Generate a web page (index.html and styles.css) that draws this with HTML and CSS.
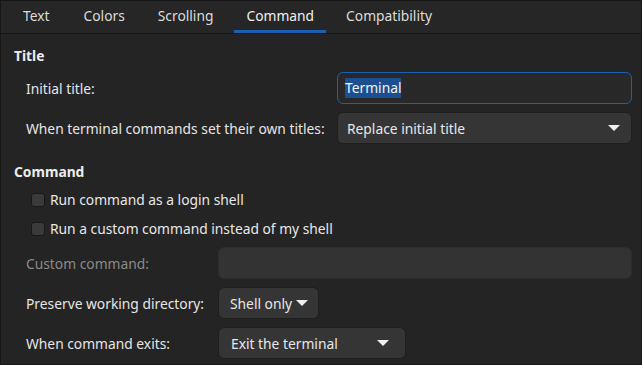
FILE: index.html
```html
<!DOCTYPE html>
<html>
<head>
<meta charset="utf-8">
<link rel="stylesheet" href="styles.css">
</head>
<body>
<div class="frame">
  <div class="tabs">
    <div class="tab">Text</div>
    <div class="tab">Colors</div>
    <div class="tab">Scrolling</div>
    <div class="tab active">Command</div>
    <div class="tab">Compatibility</div>
  </div>
  <div class="content">
    <div class="section-title">Title</div>
    <div class="grid grid-title">
      <div class="label">Initial title:</div>
      <div class="entry focused"><span class="sel">Terminal</span></div>
      <div class="label">When terminal commands set their own titles:</div>
      <div class="combo"><span>Replace initial title</span><span class="arrow"></span></div>
    </div>
    <div class="section-title cmd">Command</div>
    <div class="checks">
      <label class="check"><span class="box"></span><span>Run command as a login shell</span></label>
      <label class="check"><span class="box"></span><span>Run a custom command instead of my shell</span></label>
    </div>
    <div class="grid grid-cmd">
      <div class="label dim">Custom command:</div>
      <div class="entry plain"></div>
      <div class="label">Preserve working directory:</div>
      <div><div class="combo small"><span>Shell only</span><span class="arrow"></span></div></div>
      <div class="label">When command exits:</div>
      <div><div class="combo medium"><span>Exit the terminal</span><span class="arrow"></span></div></div>
    </div>
  </div>
</div>
</body>
</html>
```
FILE: styles.css
```css
html, body {
  margin: 0;
  padding: 0;
  background: #1b1b1b;
}
body {
  font-family: "Noto Sans", "Open Sans", sans-serif;
  font-size: 13.8px;
  color: #e8e8e8;
}
.frame {
  width: 640px;
  height: 363px;
  border: 1px solid #161616;
  background: #242424;
  overflow: hidden;
}
.tabs {
  display: flex;
  height: 32px;
  border-bottom: 1px solid #161616;
  background: #262626;
  padding-left: 10px;
}
.tab {
  display: flex;
  align-items: center;
  padding-bottom: 4px;
  color: #dcdcdc;
  box-sizing: border-box;
  position: relative;
  white-space: nowrap;
}
.tab:nth-child(1) { padding-left: 12px; padding-right: 22px; }
.tab:nth-child(2) { padding-left: 12px; padding-right: 22px; }
.tab:nth-child(3) { padding-left: 11px; padding-right: 21px; }
.tab.active {
  color: #f0f0f0;
  padding-left: 12px;
  padding-right: 12px;
  margin-right: 8px;
}
.tab:nth-child(5) { padding-left: 12px; }
.tab.active::after {
  content: "";
  position: absolute;
  left: 0;
  right: 0;
  bottom: 0;
  height: 3px;
  background: #1b5fb5;
}
.content {
  padding: 10px 8px 0 13px;
}
.section-title {
  font-weight: bold;
  color: #ececec;
  line-height: 20px;
  margin-top: 2px;
}
.section-title.cmd {
  margin-top: 18px;
}
.grid {
  display: grid;
  column-gap: 12px;
  row-gap: 8px;
  align-items: center;
  padding-left: 12px;
}
.grid-title {
  grid-template-columns: 299px 295px;
  margin-top: 6px;
}
.grid-cmd {
  grid-template-columns: 180px 414px;
  margin-top: 8px;
}
.label {
  color: #e6e6e6;
  white-space: nowrap;
}
.label.dim {
  color: #8a8a8a;
}
.entry, .combo {
  height: 32px;
  box-sizing: border-box;
  border-radius: 6px;
  display: flex;
  align-items: center;
  white-space: nowrap;
}
.entry.focused {
  background: #282828;
  border: 1px solid #1b5fb5;
  padding-left: 7px;
}
.sel {
  background: #1b4f91;
  color: #f4f4f4;
  line-height: 20px;
}
.entry.plain {
  background: #333333;
  border: 1px solid #2c2c2c;
}
.combo {
  background: #353535;
  border: 1px solid #1e1e1e;
  justify-content: space-between;
  padding: 0 10px 0 10px;
  color: #e8e8e8;
}
.combo.small {
  width: 101px;
  padding-left: 11px;
  padding-right: 6px;
  justify-content: flex-start;
  gap: 4px;
}
.combo.medium {
  width: 188px;
  padding-left: 12px;
  padding-right: 16px;
}
.arrow {
  flex: none;
  width: 0;
  height: 0;
  border-left: 6px solid transparent;
  border-right: 6px solid transparent;
  border-top: 6px solid #efefef;
}
.grid-title .combo {
  padding-left: 9px;
  padding-right: 11px;
}
.checks {
  padding-left: 17px;
  margin-top: 8px;
  display: flex;
  flex-direction: column;
  gap: 9px;
}
.check {
  display: flex;
  align-items: center;
  gap: 5px;
  line-height: 20px;
}
.box {
  width: 14px;
  height: 14px;
  box-sizing: border-box;
  border: 1px solid #181818;
  border-radius: 3px;
  background: #3a3a3a;
}
```
